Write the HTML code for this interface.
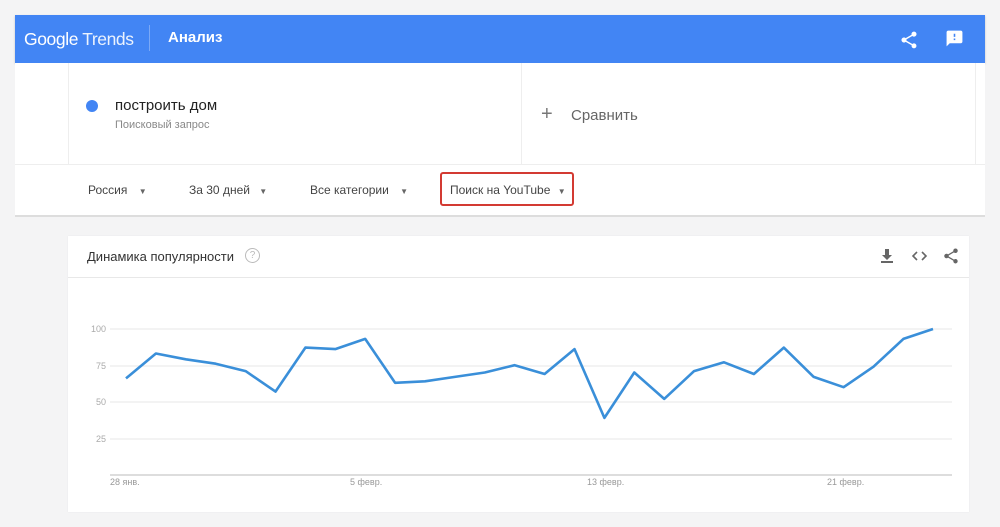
<!DOCTYPE html>
<html><head><meta charset="utf-8"><style>
body{margin:0;width:1000px;height:527px;background:#f4f4f5;font-family:"Liberation Sans",Arial,sans-serif;position:relative;overflow:hidden}
.abs{position:absolute}
.ar{font-size:8px;color:#666}
</style></head><body>
<div class="abs" style="left:15px;top:15px;width:970px;height:48px;background:#4285f4;box-shadow:0 1px 2px rgba(0,0,0,.2)"></div>
<div class="abs" style="left:24px;top:29px;color:#fff;font-size:17.5px;letter-spacing:-0.4px">Google <span style="opacity:.9">Trends</span></div>
<div class="abs" style="left:149px;top:25px;width:1px;height:26px;background:rgba(255,255,255,.3)"></div>
<div class="abs" style="left:168px;top:29px;color:#fff;font-size:15px;font-weight:bold">Анализ</div>
<svg class="abs" style="left:899px;top:30px" width="20" height="20" viewBox="0 0 24 24"><path fill="#fff" d="M18 16.08c-.76 0-1.44.3-1.960.77L8.91 12.7c.05-.23.09-.46.09-.7s-.04-.47-.09-.7l7.05-4.11c.54.5 1.25.81 2.04.81 1.66 0 3-1.34 3-3s-1.34-3-3-3-3 1.340-3 3c0 .24.04.47.09.7L8.04 9.81C7.5 9.31 6.79 9 6 9c-1.66 0-3 1.34-3 3s1.34 3 3 3c.79 0 1.5-.31 2.04-.81l7.12 4.16c-.05.21-.08.43-.08.65 0 1.61 1.31 2.92 2.92 2.92s2.92-1.31 2.92-2.92-1.31-2.92-2.92-2.92z"/></svg>
<svg class="abs" style="left:945px;top:29px" width="19" height="19" viewBox="0 0 24 24"><path fill="#fff" d="M20 2H4c-1.1 0-2 .9-2 2v18l4-4h14c1.1 0 2-.9 2-2V4c0-1.1-.9-2-2-2zm-7 12h-2v-2h2v2zm0-4h-2V6h2v4z"/></svg>
<div class="abs" style="left:15px;top:63px;width:970px;height:152px;background:#fff;border-bottom:2px solid #ddd"></div>
<div class="abs" style="left:68px;top:63px;width:906px;height:101px;border-left:1px solid #eee;border-right:1px solid #eee"></div>
<div class="abs" style="left:521px;top:63px;width:1px;height:101px;background:#eee"></div>
<div class="abs" style="left:15px;top:164px;width:970px;height:1px;background:#eee"></div>
<div class="abs" style="left:86px;top:100px;width:12px;height:12px;border-radius:50%;background:#4285f4"></div>
<div class="abs" style="left:115px;top:97px;font-size:15px;color:#222">построить дом</div>
<div class="abs" style="left:115px;top:119px;font-size:11px;color:#888">Поисковый запрос</div>
<div class="abs" style="left:541px;top:103px;font-size:20px;color:#777;font-weight:300">+</div>
<div class="abs" style="left:571px;top:107px;font-size:15px;color:#666">Сравнить</div>
<div class="abs" style="left:88px;top:183px;font-size:12px;color:#444">Россия <span class="ar" style="margin-left:8px">▼</span></div>
<div class="abs" style="left:189px;top:183px;font-size:12px;color:#444">За 30 дней <span class="ar" style="margin-left:6px">▼</span></div>
<div class="abs" style="left:310px;top:183px;font-size:12px;color:#444">Все категории <span class="ar" style="margin-left:8px">▼</span></div>
<div class="abs" style="left:440px;top:172px;width:130px;height:30px;border:2px solid #d33a32;border-radius:3px"></div>
<div class="abs" style="left:450px;top:183px;font-size:12px;color:#444">Поиск на YouTube <span class="ar" style="margin-left:4px">▼</span></div>
<div class="abs" style="left:68px;top:236px;width:901px;height:276px;background:#fff;box-shadow:0 0 1px rgba(0,0,0,.08)"></div>
<div class="abs" style="left:68px;top:277px;width:901px;height:1px;background:#e8e8e8"></div>
<div class="abs" style="left:87px;top:249px;font-size:13px;color:#333">Динамика популярности</div>
<div class="abs" style="left:245px;top:248px;width:13px;height:13px;border:1.5px solid #bbb;border-radius:50%;color:#bbb;font-size:10px;text-align:center;line-height:13px">?</div>
<svg class="abs" style="left:880px;top:248px" width="14" height="16" viewBox="0 0 14 16"><path fill="#666" d="M5 1h4v6h3l-5 5-5-5h3z"/><rect x="1" y="13" width="12" height="2" fill="#666"/></svg>
<svg class="abs" style="left:911px;top:250px" width="17" height="12" viewBox="0 0 17 12"><path fill="none" stroke="#666" stroke-width="1.6" d="M6 2L2 6l4 4M11 2l4 4-4 4"/></svg>
<svg class="abs" style="left:942px;top:247px" width="18" height="18" viewBox="0 0 24 24"><path fill="#666" d="M18 16.08c-.76 0-1.44.3-1.96.77L8.91 12.7c.05-.23.09-.46.09-.7s-.04-.47-.09-.7l7.05-4.11c.54.5 1.25.81 2.04.81 1.66 0 3-1.34 3-3s-1.34-3-3-3-3 1.34-3 3c0 .24.04.47.09.7L8.04 9.81C7.5 9.31 6.79 9 6 9c-1.66 0-3 1.34-3 3s1.34 3 3 3c.79 0 1.5-.31 2.04-.81l7.12 4.16c-.05.21-.08.43-.08.65 0 1.61 1.31 2.92 2.92 2.920s2.92-1.31 2.92-2.92-1.31-2.92-2.92-2.92z"/></svg>
<svg class="abs" style="left:0;top:0" width="1000" height="527" font-family="Liberation Sans, Arial, sans-serif">
<g stroke="#ececec" stroke-width="1.2">
<line x1="110" y1="329" x2="952" y2="329"/><line x1="110" y1="366" x2="952" y2="366"/><line x1="110" y1="402" x2="952" y2="402"/><line x1="110" y1="439" x2="952" y2="439"/>
</g>
<line x1="110" y1="475" x2="952" y2="475" stroke="#bbb" stroke-width="1"/>
<g fill="#aaa" font-size="9" text-anchor="end">
<text x="106" y="332">100</text><text x="106" y="369">75</text><text x="106" y="405">50</text><text x="106" y="442">25</text>
</g>
<g fill="#999" font-size="9">
<text x="110" y="485">28 янв.</text><text x="350" y="485">5 февр.</text><text x="587" y="485">13 февр.</text><text x="827" y="485">21 февр.</text>
</g>
<polyline fill="none" stroke="#3a8fd9" stroke-width="2.6" stroke-linejoin="round" points="126,378.4 155.9,353.5 185.8,359.3 215.7,363.7 245.6,371.1 275.5,391.6 305.4,347.6 335.3,349.1 365.2,338.9 395.1,382.8 425,381.3 454.9,376.9 484.8,372.5 514.7,365.2 544.6,374 574.5,349.1 604.4,417.9 634.3,372.5 664.2,398.9 694.1,371.1 724,362.3 753.9,374 783.8,347.6 813.7,376.9 843.6,387.2 873.5,366.7 903.4,338.9 933,329"/>
</svg>
</body></html>
